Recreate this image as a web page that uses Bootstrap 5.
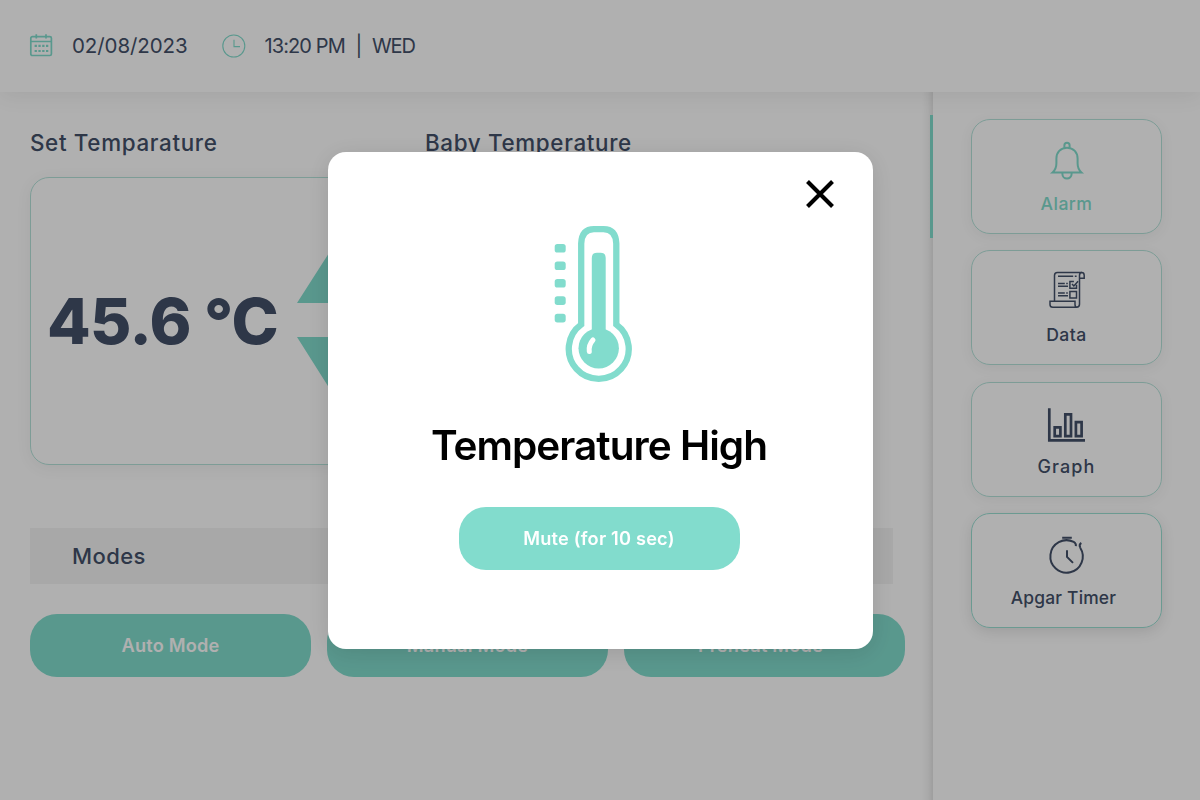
<!DOCTYPE html>
<html lang="en">
<head>
<meta charset="utf-8">
<title>Incubator Monitor</title>
<link href="https://cdn.jsdelivr.net/npm/bootstrap@5.3.0/dist/css/bootstrap.min.css" rel="stylesheet">
<style>
body{font-family:Inter,"Open Sans",sans-serif;color:#435069;width:1200px;height:800px;overflow:hidden;background:#fff}
span,h1{white-space:nowrap}
.topbar{height:92px;padding-left:29px;box-shadow:0 4px 20px rgba(0,0,0,.07);position:relative;z-index:2;font-size:20.5px}
.date-text{margin-left:19px;letter-spacing:-.08px;width:116px}
.clock-icon{margin-left:34px}
.time-text{margin-left:18.500px;font-size:20px;letter-spacing:-.9px;width:91px}
.bar-text{width:16.500px}
.day-text{font-size:20px;letter-spacing:-1.100px}
.main-pane{width:933px;height:708px;padding:33px 0 0 30px;background:linear-gradient(to left,rgba(0,0,0,.1),rgba(0,0,0,.035) 5px,transparent 11px) right/11px 100% no-repeat}
.side-pane{width:267px;padding:27px 38px 0;gap:16.4px}
.temp-col{width:395px}
.sec-title{font-size:22.400px;line-height:36px;font-weight:500;letter-spacing:.66px}
.reading-box{width:375px;height:288px;margin-top:16px;border:1px solid #b5e3da;border-radius:19px;box-shadow:0 3px 16px rgba(0,0,0,.06);padding-left:16px}
.reading{font-size:63.5px;line-height:64px;font-weight:800;letter-spacing:-.6px;width:250px}
.modes-bar{height:56px;width:863px;background:#f4f4f4;padding-left:42px;font-size:22px;font-weight:500;letter-spacing:.4px;margin-top:63px}
.mode-row{margin-top:30px}
.pill{width:281px;height:63px;border-radius:27px;background:#82dccd;color:#fff;font-size:18.200px;font-weight:600;border:0;flex:none;letter-spacing:.2px;padding:0}
.tile{height:115px;border:1px solid #b5e3da;border-radius:19px;box-shadow:0 3px 14px rgba(0,0,0,.06);font-size:17.600px;font-weight:500;flex:none;position:relative}
.tile svg{height:42px;width:42px;margin-top:20px}
.tile span{line-height:24px;margin-top:10px;letter-spacing:.45px}
.tile .wide{font-size:18px;letter-spacing:1.050px}
.tile .long{font-size:17.400px;letter-spacing:.2px;margin-right:6px}
.tile-on{color:#82dccd}
.tile-on::before{content:"";position:absolute;left:-42px;top:-5px;width:3px;height:123px;background:#82dccd}
.tile-deep{border-color:#9bdfd3;box-shadow:0 4px 14px rgba(0,0,0,.11)}
.shade{inset:0;background:rgba(0,0,0,.31);padding:152px 0 0 328px;z-index:5}
.alert-box{width:545px;height:497px;border-radius:18px;box-shadow:0 4px 24px rgba(0,0,0,.12);background:#fff;padding:28px 39px 0 36px}
.x-btn{width:28px;height:28px;line-height:0}
.thermo{margin:17px 12px 0 0}
.headline{font-size:40.5px;line-height:50px;font-weight:600;letter-spacing:-.97px;color:#000;margin:38.500px 0 36.500px}
</style>
</head>
<body>
<header class="topbar d-flex align-items-center bg-white">
<svg width="24" height="24" viewBox="0 0 24 24" fill="none" stroke="#82dccd" stroke-width="1.7"><rect x="1.8" y="2.6" width="20.6" height="18.9" rx="1.6"/><path d="M1.8 7.5h20.6M7.3.3v4.2M17 .3v4.2"/><path d="M5.6 11.9h13.8M5.6 17h13.8" stroke-width="2.2" stroke-dasharray="2.3 1.5"/></svg>
<span class="date-text">02/08/2023</span>
<svg class="clock-icon" width="24" height="24" viewBox="0 0 24 24" fill="none" stroke="#82dccd" stroke-width="1.1"><circle cx="11.8" cy="12" r="11"/><path d="M12 5.8v6.8h6"/></svg>
<span class="time-text">13:20 PM</span><span class="bar-text">|</span><span class="day-text">WED</span>
</header>
<div class="d-flex">
<main class="main-pane">
<div class="d-flex">
<section class="temp-col">
<div class="sec-title">Set Temparature</div>
<div class="reading-box d-flex align-items-center"><span class="reading">45.6 °C</span>
<svg width="96" height="188" viewBox="0 -2 96 188" fill="#82dccd"><path d="M0 74 48 -1 96 74zM0 108h96L48 184z"/></svg></div>
</section>
<section><div class="sec-title">Baby Temperature</div></section>
</div>
<div class="modes-bar d-flex align-items-center">Modes</div>
<div class="mode-row d-flex gap-3">
<button class="pill">Auto Mode</button>
<button class="pill">Manual Mode</button>
<button class="pill pe-2">Preheat Mode</button>
</div>
</main>
<aside class="side-pane d-flex flex-column">
<div class="tile tile-on d-flex flex-column align-items-center">
<svg viewBox="0 0 42 42" fill="none" stroke="currentColor" stroke-width="2"><path d="M6.600 32.400h28.800c-3-2.600-3.800-5.200-3.800-9.100v-4.800C31.600 12.600 27.600 7.700 21 7.700S10.400 12.600 10.400 18.500v4.800c0 3.900-.8 6.500-3.800 9.100z"/><path d="M18.400 7.800V5.300a2.600 2.600 0 0 1 5.200 0v2.500M16.400 33v1a4.600 4.600 0 0 0 9.200 0v-1"/></svg>
<span>Alarm</span></div>
<div class="tile d-flex flex-column align-items-center">
<svg viewBox="0 0 42 42" fill="none" stroke="currentColor" stroke-width="1.500"><path d="M8.500 30.300V4.400q0-2.900 2.900-2.900H35.500q2.700 0 2.700 2.700v3H33.500V4.200q0-2.700 2.600-2.700M33.500 6.700v26.600q0 2.900-2.900 2.900H6.800q-2.800 0-2.800-2.800v-3.100h25v3.100q0 2.900 2 2.900"/><path d="M12 5.300h15.200M28.800 5.300h1.800M12 12.500h6.800M20.200 12.500h1.600M12 15.200h10M12 22h6.800M20.200 22h1.600M12 24.700h10M30.500 13.800v3.400h-6.600v-6.600h4M26 13l1.900 2 4.200-4.700M23.900 20.500h6.600v6.600h-6.600z"/></svg>
<span>Data</span></div>
<div class="tile d-flex flex-column align-items-center">
<svg viewBox="0 0 42 42" fill="none" stroke="currentColor" stroke-width="2.700"><path d="M3.300 5.200v32.200h35.700M8.700 24.300h5.700v8.800H8.700zM19.300 11.300h5.700v21.800h-5.700zM29.900 19.200h5.700v13.900h-5.700z"/></svg>
<span class="wide">Graph</span></div>
<div class="tile tile-deep d-flex flex-column align-items-center">
<svg viewBox="0 0 42 42" fill="none" stroke="currentColor" stroke-width="2"><path d="M34.200 13.700A16.200 16.200 0 1 1 27.700 7.900q2.500 1.300 2.200 4.300M35.300 8.800q-2.600 1.600-1.100 4.900M16.200 3.800h9.600M21 16.200v6.700l6 6"/></svg>
<span class="long">Apgar Timer</span></div>
</aside>
</div>
<div class="shade position-fixed">
<div class="alert-box d-flex flex-column align-items-center" role="dialog">
<button class="x-btn btn p-0 border-0 align-self-end" aria-label="Close"><svg width="28" height="28" viewBox="0 0 28 28" stroke="#000" stroke-width="4.100"><path d="M1.500 1.500l25 25M26.500 1.500l-25 25"/></svg></button>
<svg class="thermo" width="79" height="157" viewBox="0 0 79 157" fill="#82dccd"><path d="M27.200 99.500V18.500Q27.800 4.200 40 4.200H49.500Q61.700 4.200 62.300 18.500V99.500A30 30 0 1 1 27.200 99.500z" fill="none" stroke="#82dccd" stroke-width="6.300"/><path d="M37.800 105V33q0-5.300 5.200-5.300h3.500q5.200 0 5.200 5.300v72z"/><circle cx="44.700" cy="123.300" r="20.200"/><path d="M35.300 126.500q-.8-6.500 3.700-11.500" fill="none" stroke="#fff" stroke-width="5" stroke-linecap="round"/><rect x=".7" y="18.900" width="11" height="8.700" rx="2.700"/><rect x=".7" y="36.400" width="11" height="8.700" rx="2.700"/><rect x=".7" y="53.900" width="11" height="8.700" rx="2.700"/><rect x=".7" y="71.300" width="11" height="8.700" rx="2.700"/><rect x=".7" y="88.700" width="11" height="8.700" rx="2.700"/></svg>
<h1 class="headline">Temperature High</h1>
<button class="pill">Mute (for 10 sec)</button>
</div>
</div>
<script src="https://cdn.jsdelivr.net/npm/bootstrap@5.3.0/dist/js/bootstrap.bundle.min.js"></script>
</body>
</html>
